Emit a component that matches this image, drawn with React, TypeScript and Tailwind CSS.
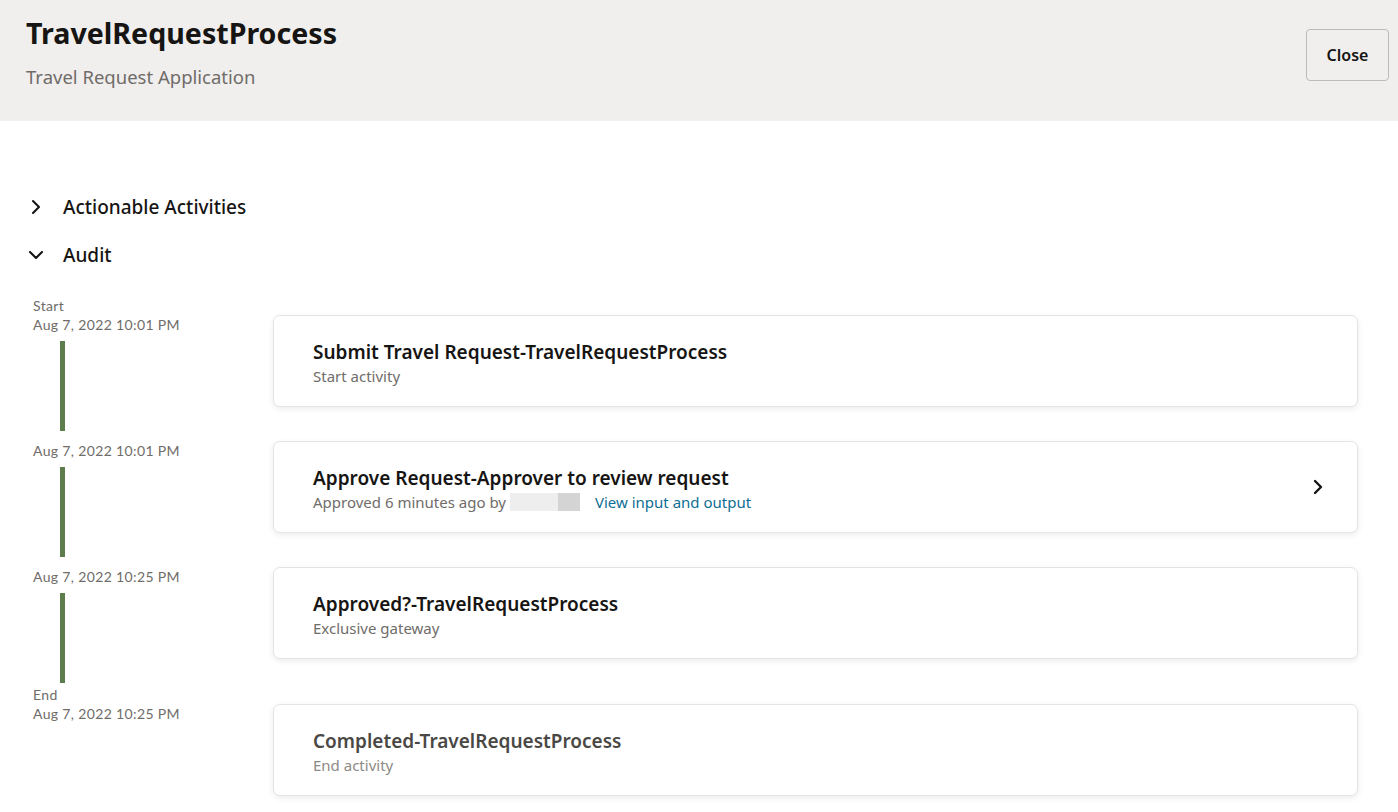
import { ChevronRight, ChevronDown } from 'lucide-react';

type Step = {
  label?: string;
  date: string;
  title: string;
  sub: string;
  bar: boolean;
  link?: boolean;
  done?: boolean;
};

const steps: Step[] = [
  { label: 'Start', date: 'Aug 7, 2022 10:01 PM', title: 'Submit Travel Request-TravelRequestProcess', sub: 'Start activity', bar: true },
  { date: 'Aug 7, 2022 10:01 PM', title: 'Approve Request-Approver to review request', sub: 'Approved 6 minutes ago by', bar: true, link: true },
  { date: 'Aug 7, 2022 10:25 PM', title: 'Approved?-TravelRequestProcess', sub: 'Exclusive gateway', bar: true },
  { label: 'End', date: 'Aug 7, 2022 10:25 PM', title: 'Completed-TravelRequestProcess', sub: 'End activity', bar: false, done: true },
];

const App = () => {
  return (
    <div className="min-h-screen bg-white text-[#161513]" style={{ fontFamily: '"Noto Sans", sans-serif' }}>
      {/* Header */}
      <header className="bg-[#f1efed] h-[121px] flex justify-between pl-[26px] pr-[9px]">
        <div className="pt-[15px]">
          <h1 className="text-[28.6px] font-bold leading-[36px]">TravelRequestProcess</h1>
          <p className="text-[18.5px] text-[#6f6c69] leading-[24px] mt-[14px]">Travel Request Application</p>
        </div>
        <div className="pt-[29px]">
          <button className="w-[83px] h-[52px] border border-[#bdbbb8] rounded-[4px] bg-[#f1efed] text-[16px] font-semibold">
            Close
          </button>
        </div>
      </header>

      {/* Sections */}
      <div className="pt-[74px] pl-[24px]">
        <div className="flex items-center h-[24px] gap-[15px]">
          <ChevronRight size={24} strokeWidth={2.1} />
          <span className="text-[19px] font-medium">Actionable Activities</span>
        </div>
        <div className="flex items-center h-[24px] gap-[15px] mt-[24px]">
          <ChevronDown size={24} strokeWidth={2.1} />
          <span className="text-[19px] font-medium">Audit</span>
        </div>
      </div>

      {/* Audit timeline */}
      <div className="pl-[33px] pr-[40px] pt-[29px]">
        {steps.map((s, i) => (
          <div key={i} className={i > 0 ? (s.label ? 'mt-[2px]' : 'mt-[10px]') : ''}>
            {s.label && (
              <div className="text-[14px] leading-[19px] tracking-[0.35px] text-[#6f6c69]" style={{ fontFamily: 'Lato, sans-serif' }}>
                {s.label}
              </div>
            )}
            <div className="flex">
              <div className="w-[240px] shrink-0">
                <div className="text-[14px] leading-[19px] tracking-[0.35px] text-[#6f6c69]" style={{ fontFamily: 'Lato, sans-serif' }}>
                  {s.date}
                </div>
                {s.bar && <div className="ml-[27px] mt-[7px] w-[5px] h-[90px] bg-[#5d7d4b]" />}
              </div>
              <div className="flex-1 h-[92px] rounded-[7px] border border-[#e6e4e1] bg-white shadow-[0_2px_6px_rgba(0,0,0,0.08)] flex items-center justify-between pl-[39px] pr-[27px]">
                <div className="pt-[4px]">
                  <div className={`text-[19px] font-semibold leading-[25px] ${s.done ? 'text-[#4a4845]' : 'text-[#161513]'}`}>
                    {s.title}
                  </div>
                  <div className={`text-[15px] leading-[22px] flex items-center ${s.done ? 'text-[#8d8a86]' : 'text-[#6f6c69]'}`}>
                    {s.sub}
                    {s.link && (
                      <>
                        <span className="ml-[4px] inline-flex h-[18px]">
                          <span className="w-[48px] bg-[#eeeeee]" />
                          <span className="w-[22px] bg-[#d4d4d4]" />
                        </span>
                        <a href="#" className="ml-[15px] text-[#0e6e94]">View input and output</a>
                      </>
                    )}
                  </div>
                </div>
                {s.link && <ChevronRight size={24} strokeWidth={2.4} className="text-[#161513]" />}
              </div>
            </div>
          </div>
        ))}
      </div>
    </div>
  );
};

export default App;
